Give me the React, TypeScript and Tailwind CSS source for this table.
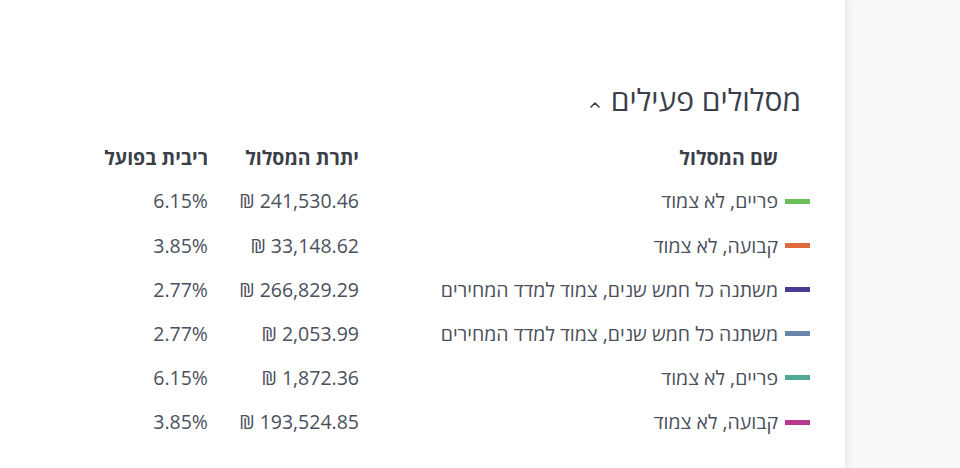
import React from "react";

type Track = {
  name: string;
  color: string;
  balance: string;
  rate: string;
};

const TRACKS: Track[] = [
  { name: "פריים, לא צמוד", color: "bg-[#6abf5a]", balance: "241,530.46", rate: "6.15%" },
  { name: "קבועה, לא צמוד", color: "bg-[#e0693a]", balance: "33,148.62", rate: "3.85%" },
  { name: "משתנה כל חמש שנים, צמוד למדד המחירים", color: "bg-[#4a3a90]", balance: "266,829.29", rate: "2.77%" },
  { name: "משתנה כל חמש שנים, צמוד למדד המחירים", color: "bg-[#6b86ad]", balance: "2,053.99", rate: "2.77%" },
  { name: "פריים, לא צמוד", color: "bg-[#4fa994]", balance: "1,872.36", rate: "6.15%" },
  { name: "קבועה, לא צמוד", color: "bg-[#b8378f]", balance: "193,524.85", rate: "3.85%" },
];

function TrackRow({ track }: { track: Track }) {
  return (
    <div className="grid grid-cols-[451px_151px_1fr] h-[44.2px] items-center text-[19.5px] text-[#4b505c]">
      <div className="flex items-center gap-[7px]">
        <span className={`w-[25px] h-[5px] shrink-0 ${track.color}`} />
        <span>{track.name}</span>
      </div>
      <div>
        <span dir="ltr">₪ {track.balance}</span>
      </div>
      <div>
        <span dir="ltr">{track.rate}</span>
      </div>
    </div>
  );
}

export default function App() {
  return (
    <div
      className="flex w-[960px] h-[468px] overflow-hidden bg-[#f8f8f9]"
      style={{ fontFamily: "'Open Sans', 'Noto Sans', sans-serif" }}
    >
      <div
        dir="rtl"
        className="relative z-10 w-[845px] h-full bg-white shadow-[3px_0_8px_rgba(0,0,0,0.07)] pt-[80px] pr-[35px]"
      >
        <div className="flex items-center gap-[10px] mr-[9px] h-[40px]">
          <h2 className="text-[30px] leading-[40px] text-[#3a3f4b] font-normal">
            מסלולים פעילים
          </h2>
          <svg
            width="12"
            height="8"
            viewBox="0 0 12 8"
            className="mt-[9px] text-[#3a3f4b]"
            fill="none"
            stroke="currentColor"
            strokeWidth="1.6"
            strokeLinecap="round"
            strokeLinejoin="round"
          >
            <path d="M2 6 L6 2 L10 6" />
          </svg>
        </div>

        <div className="mt-[23px] grid grid-cols-[451px_151px_1fr] h-[28px] items-center text-[19.5px] font-bold text-[#3b3f4a]">
          <div className="pr-[32px]">שם המסלול</div>
          <div>יתרת המסלול</div>
          <div>ריבית בפועל</div>
        </div>

        <div className="mt-[8px]">
          {TRACKS.map((t, i) => (
            <TrackRow key={i} track={t} />
          ))}
        </div>
      </div>
      <div className="flex-1" />
    </div>
  );
}
